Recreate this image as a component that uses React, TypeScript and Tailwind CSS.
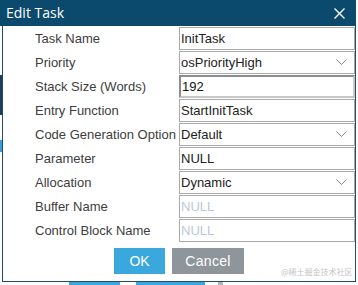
import { ReactNode } from 'react'

interface Field {
  label: string
  value: string
  kind: 'text' | 'select' | 'edit' | 'placeholder'
}

const fields: Field[] = [
  { label: 'Task Name', value: 'InitTask', kind: 'text' },
  { label: 'Priority', value: 'osPriorityHigh', kind: 'select' },
  { label: 'Stack Size (Words)', value: '192', kind: 'edit' },
  { label: 'Entry Function', value: 'StartInitTask', kind: 'text' },
  { label: 'Code Generation Option', value: 'Default', kind: 'select' },
  { label: 'Parameter', value: 'NULL', kind: 'text' },
  { label: 'Allocation', value: 'Dynamic', kind: 'select' },
  { label: 'Buffer Name', value: 'NULL', kind: 'placeholder' },
  { label: 'Control Block Name', value: 'NULL', kind: 'placeholder' },
]

function Chevron() {
  return (
    <svg width="11" height="7" viewBox="0 0 11 7" className="mr-[7px] shrink-0">
      <polyline points="0.5,0.5 5.5,5.5 10.5,0.5" fill="none" stroke="#8a8a8a" strokeWidth="1" />
    </svg>
  )
}

function FieldBox({ field }: { field: Field }): ReactNode {
  if (field.kind === 'edit') {
    return (
      <div className="h-[23px] mb-[1px] flex items-center border-2 border-[#8c8c8c] border-r-[#c8c8c8] border-b-[#c8c8c8] pl-[1px] text-[#111]">
        {field.value}
      </div>
    )
  }
  return (
    <div className="h-[23px] mb-[1px] flex items-center justify-between border border-[#a9a9a9] pl-[1px]">
      <span className={field.kind === 'placeholder' ? 'text-[#b8c8d8]' : 'text-[#222]'}>{field.value}</span>
      {field.kind === 'select' && <Chevron />}
    </div>
  )
}

export default function App() {
  return (
    <div className="w-[358px] h-[285px] bg-white overflow-hidden relative font-['Liberation_Sans',Arial,sans-serif] text-[13px]">
      {/* Title bar */}
      <div className="h-[26px] w-[356px] bg-[#0b4a6d] flex items-center justify-between pl-[6px] pr-[11px]">
        <span className="text-white text-[14px] font-['Open_Sans',sans-serif] leading-none">Edit Task</span>
        <svg width="11" height="11" viewBox="0 0 11 11">
          <path d="M0.5 0.5 L10.5 10.5 M10.5 0.5 L0.5 10.5" stroke="white" strokeWidth="1.4" />
        </svg>
      </div>

      <div className="flex">
        {/* background peeking at left */}
        <div className="w-[2px] flex flex-col">
          <div className="h-[49px]" />
          <div className="h-[40px] bg-[#1c3d5c]" />
          <div className="h-[25px]" />
          <div className="h-[12px] bg-[#3a9ed6]" />
        </div>

        {/* Dialog body */}
        <div className="w-[354px] h-[256px] border-l border-r border-b border-[#1f4d68] flex flex-col">
          <div className="grid grid-cols-[176px_1fr] pt-[1px]">
            {fields.map((f) => (
              <div key={f.label} className="contents">
                <div className="h-[24px] flex items-center pl-[32px] text-[#3d3d3d] whitespace-nowrap">{f.label}</div>
                <FieldBox field={f} />
              </div>
            ))}
          </div>

          <div className="flex justify-center gap-[7px] mt-[5px]">
            <button className="w-[51px] h-[26px] bg-[#3aa8dd] text-white text-[14px]">OK</button>
            <button className="w-[72px] h-[26px] bg-[#8e969b] text-white text-[14px] tracking-[0.3px]">Cancel</button>
          </div>
        </div>
      </div>

      {/* bottom strip of the window behind */}
      <div className="flex h-[3px]">
        <div className="w-[69px]" />
        <div className="w-[51px] bg-[#3aa8dd]" />
        <div className="w-[16px]" />
        <div className="w-[69px] bg-[#3aa8dd]" />
        <div className="w-[13px]" />
        <div className="w-[5px] bg-[#b0b4b8]" />
      </div>

      {/* watermark */}
      <span className="absolute left-[281px] top-[266px] text-[8px] text-[#c4c4c4] font-['Noto_Sans_CJK_SC',sans-serif] whitespace-nowrap">
        @稀土掘金技术社区
      </span>
    </div>
  )
}
